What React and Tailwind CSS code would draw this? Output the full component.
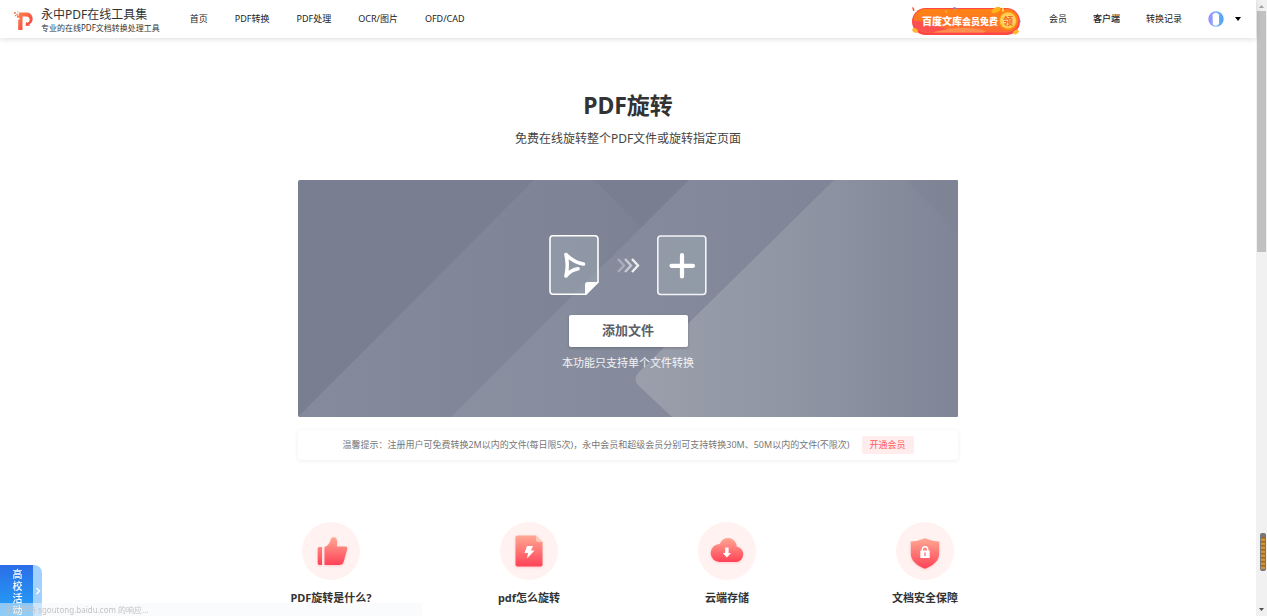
const navLinks = ['首页', 'PDF转换', 'PDF处理', 'OCR/图片', 'OFD/CAD']

const features = [
  { title: 'PDF旋转是什么?', Icon: ThumbIcon },
  { title: 'pdf怎么旋转', Icon: FileIcon },
  { title: '云端存储', Icon: CloudIcon },
  { title: '文档安全保障', Icon: ShieldIcon },
]

function Logo() {
  return (
    <svg className="size-5 shrink-0" viewBox="0 0 20 20" fill="none">
      <defs>
        <linearGradient id="logo" x1="0" y1="0" x2="1" y2="1">
          <stop offset="0" stopColor="#ff8a4c" />
          <stop offset="1" stopColor="#f5333f" />
        </linearGradient>
      </defs>
      <path d="M5 1.500h7.500a6.200 6.200 0 0 1 2.800 11.700l.9 1.300-4.600.6.4-4.400 1 1a2.900 2.900 0 0 0-1-6.200H8.500V19H4.200V8.500h1.500V6.800H3V4.500h2z" fill="url(#logo)" />
      <path d="M0 1h2v1.800H0zM2.400 2.800h1.800v1.700H2.400zM3.400.4h1.200v1.200H3.400zM.8 4h1.300v1.200H.8z" fill="#ff8558" />
    </svg>
  )
}

function Avatar() {
  return (
    <svg className="size-4" viewBox="0 0 16 16">
      <defs>
        <linearGradient id="avatar" x1="0" y1="0" x2="1" y2="0">
          <stop offset="0" stopColor="#9b8cff" />
          <stop offset=".5" stopColor="#7fb2ff" />
          <stop offset="1" stopColor="#4aa3f5" />
        </linearGradient>
      </defs>
      <circle cx="8" cy="8" r="7.700" fill="url(#avatar)" />
      <path d="M4.600 3.400Q8 0 11 3.800V13q-3 3.400-6.200.4z" fill="#fff" />
    </svg>
  )
}

function PromoBanner() {
  return (
    <a href="#vip" className="relative flex h-7 w-[109px] shrink-0 items-center">
      <svg className="absolute inset-0 size-full" viewBox="0 0 109 28">
        <defs>
          <linearGradient id="promo" x1="0" y1="0" x2="0" y2="1">
            <stop offset="0" stopColor="#ff8412" />
            <stop offset="1" stopColor="#ff6a35" />
          </linearGradient>
          <radialGradient id="coin">
            <stop offset="0" stopColor="#fff0a8" />
            <stop offset="1" stopColor="#ffc63c" />
          </radialGradient>
        </defs>
        <rect x="0" y="1" width="108" height="27" rx="13.500" fill="#ff4747" />
        <rect x="1.500" y="2" width="105" height="23.500" rx="11.700" fill="url(#promo)" />
        <path d="M1 14q9-1 14 3 8-2 12 3 9 1 13 5H13Q2 24 1 14z" fill="#ff5050" />
        <path d="M22 25q30-8 52-1l-2 1.500H22z" fill="#ff9150" />
        <ellipse cx="84" cy="3" rx="5" ry="2.400" fill="#ffb21c" transform="rotate(-25 84 3)" />
        <ellipse cx="3" cy="23.500" rx="3" ry="2" fill="#ffb830" transform="rotate(30 3 23.500)" />
        <ellipse cx="104" cy="25" rx="3" ry="2" fill="#ffb830" transform="rotate(-30 104 25)" />
        <path d="M0 0l2 1 .5 3L1 4z" fill="#ff5a45" />
        <path d="M41 0l3 .5 1 1.500-3-.5zM107 13l2 1-1 1.500z" fill="#6f8cf0" />
        <path d="M90 1l1.500-.5.5 4H90zM34 3l1 3-1.500-1z" fill="#ffd257" />
        <circle cx="96" cy="14" r="9.300" fill="#f98b14" />
        <circle cx="96" cy="13.500" r="8.300" fill="url(#coin)" />
      </svg>
      <span className="relative pl-[10px] text-[10px] font-black leading-4 text-white">
        百度文库<span className="text-[9px]">会员免费</span>
      </span>
      <span className="absolute right-0 w-[26px] text-center text-[10px] font-bold leading-4 text-[#f2671f]">领</span>
    </a>
  )
}

function Header() {
  return (
    <header className="relative z-10 flex h-[38px] shrink-0 items-center bg-white px-[14px] text-[9px] text-[#222] shadow-[0_1px_6px_rgba(0,0,0,0.14)]">
      <a href="#home" className="flex items-center gap-[7px] whitespace-nowrap pt-1">
        <Logo />
        <span className="flex flex-col text-[#333]">
          <span className="text-xs leading-[14px]">永中PDF在线工具集</span>
          <span className="text-[8px] leading-3">专业的在线PDF文档转换处理工具</span>
        </span>
      </a>
      <nav className="ml-[30px] flex items-center gap-[27px] whitespace-nowrap">
        {navLinks.map(link => (
          <a key={link} href="#tools">{link}</a>
        ))}
      </nav>
      <div className="ml-auto flex items-center gap-[26px] whitespace-nowrap">
        <div className="pr-[2px] pt-1">
          <PromoBanner />
        </div>
        <a href="#member">会员</a>
        <a href="#client" className="font-medium">客户端</a>
        <a href="#history">转换记录</a>
        <button type="button" aria-label="账户" className="flex items-center gap-[10px]">
          <Avatar />
          <svg className="h-1 w-2" viewBox="0 0 8 4"><path d="M1 0h6L4 4z" fill="#000" /></svg>
        </button>
      </div>
    </header>
  )
}

function PanelBackground() {
  return (
    <svg className="absolute inset-0 size-full" viewBox="0 0 660 237" preserveAspectRatio="none">
      <defs>
        <linearGradient id="band1" x1="0" y1="0" x2="1" y2="0">
          <stop offset="0" stopColor="#858b9c" />
          <stop offset="1" stopColor="#7b8093" />
        </linearGradient>
        <linearGradient id="band2" x1="0" y1="0" x2="1" y2="0">
          <stop offset="0" stopColor="#8a90a0" />
          <stop offset="1" stopColor="#7c8294" />
        </linearGradient>
        <linearGradient id="band3" x1="0" y1="0" x2="1" y2="0">
          <stop offset="0" stopColor="#9b9fac" />
          <stop offset=".5" stopColor="#8f95a3" />
          <stop offset="1" stopColor="#7f8596" />
        </linearGradient>
      </defs>
      <path d="M0 0h660v237H0z" fill="#797e91" />
      <path d="M0 237L236 0h60l96 96v141z" fill="url(#band1)" />
      <path d="M153 237L391 0h269v237z" fill="url(#band2)" />
      <path d="M374 237l-33-31q-7-7 0-14L536 0h124v237z" fill="url(#band3)" />
      <path d="M609 0h51v54z" fill="#7c8294" fillOpacity=".4" />
    </svg>
  )
}

function ConvertIcons() {
  return (
    <svg className="h-[62px] w-[160px]" viewBox="0 0 160 62" fill="none">
      <path d="M5 1.800h42a3 3 0 0 1 3 3V48L38 60.300H5a3 3 0 0 1-3-3V4.800a3 3 0 0 1 3-3z" fill="#9ba5b0" fillOpacity=".6" stroke="#fff" strokeWidth="1.600" />
      <path d="M37 61V50.500a2.500 2.500 0 0 1 2.500-2.500H51z" fill="#fff" />
      <path d="M18 20.500c1.600 7 1.600 14.500 0 21.500M18 20.500c5 5 10.500 8.500 17.500 9.500M18 42c3-4 6-6 12-7.200" stroke="#fff" strokeWidth="3.500" strokeLinecap="round" strokeLinejoin="round" />
      <g strokeWidth="2.400">
        <path d="M70 25l6 6.500-6 6.500" stroke="#fff" strokeOpacity=".3" />
        <path d="M77 25l6 6.500-6 6.500" stroke="#fff" strokeOpacity=".55" />
        <path d="M84 25l6 6.500-6 6.500" stroke="#fff" strokeOpacity=".85" />
      </g>
      <rect x="109.800" y="2" width="48" height="58.500" rx="3" fill="#9ba5b0" fillOpacity=".6" stroke="#fff" strokeOpacity=".9" strokeWidth="1.600" />
      <path d="M134 21v21.500M123.500 31.800h21.500" stroke="#fff" strokeWidth="4.200" strokeLinecap="round" />
    </svg>
  )
}

function IconGradient({ id }) {
  return (
    <defs>
      <linearGradient id={id} x1="0" y1="0" x2="0" y2="1">
        <stop offset="0" stopColor="#ffa893" />
        <stop offset="1" stopColor="#ff4257" />
      </linearGradient>
    </defs>
  )
}

const iconClass = 'size-[58px] drop-shadow-[0_1px_1px_rgba(255,80,90,0.25)]'

function ThumbIcon() {
  return (
    <svg className={iconClass} viewBox="0 0 58 58">
      <IconGradient id="thumb" />
      <path d="M17.500 25H20v18h-2.500a1.800 1.800 0 0 1-1.800-1.800V26.800A1.800 1.800 0 0 1 17.500 25zM22.500 25q4-1 6-6.500c.8-2 .5-3.300 3.300-3.300 3 0 4 3.500 3 9.300h8.500a2 2 0 0 1 1.900 2.700l-3.700 13q-.8 2.800-3.500 2.800H22.500z" fill="url(#thumb)" />
    </svg>
  )
}

function FileIcon() {
  return (
    <svg className={iconClass} viewBox="0 0 58 58">
      <IconGradient id="file" />
      <path d="M17.500 13.500H36l6.500 6.500v22.500a2 2 0 0 1-2 2h-23a2 2 0 0 1-2-2v-27a2 2 0 0 1 2-2z" fill="url(#file)" />
      <path d="M36 13.500l6.500 6.500H38a2 2 0 0 1-2-2z" fill="#ffc9bd" />
      <path d="M27 24h6l-2 4.500h3.500L27 36.500l1-5.500h-3.500z" fill="#fff" />
    </svg>
  )
}

function CloudIcon() {
  return (
    <svg className={iconClass} viewBox="0 0 58 58">
      <IconGradient id="cloud" />
      <path d="M21.500 40a9 9 0 0 1 .3-18 8.600 8.600 0 0 1 16.800 2.500A7.800 7.800 0 0 1 38 40z" fill="url(#cloud)" />
      <path d="M27.200 25.500h3.400V31H33l-4.100 4.500L24.800 31h2.400z" fill="#fff" />
    </svg>
  )
}

function ShieldIcon() {
  return (
    <svg className={iconClass} viewBox="0 0 58 58">
      <IconGradient id="shield" />
      <path d="M29 16.200q7 3 14.200 3.300v12.500c0 6.500-6 11.500-14.200 14.800-8.200-3.300-14.200-8.300-14.200-14.800V19.500Q22 19.200 29 16.200z" fill="url(#shield)" />
      <path d="M26.300 29v-1.500a2.700 2.700 0 0 1 5.400 0V29" fill="none" stroke="#fff" strokeWidth="1.400" />
      <rect x="24.300" y="28.500" width="9.400" height="7.500" rx=".6" fill="#fff" />
      <path d="M28.400 30.500h1.200v3.500h-1.200z" fill="#ff5a68" />
    </svg>
  )
}

function PageScrollbar() {
  return (
    <aside className="relative flex w-[11px] shrink-0 flex-col items-center justify-between bg-[#f1f1f1] py-1">
      <svg className="h-1 w-[7px]" viewBox="0 0 7 4"><path d="M1 4h5L3.500 1z" fill="#a3a3a3" /></svg>
      <div className="absolute inset-x-px top-[11px] h-[241px] bg-[#c1c1c1]" />
      <svg className="h-1 w-[7px]" viewBox="0 0 7 4"><path d="M1 0h5L3.500 3z" fill="#505050" /></svg>
      <svg className="absolute bottom-[45px] right-px h-[38px] w-1.5" viewBox="0 0 6 38">
        <rect width="6" height="38" rx="2" fill="#777" />
        <rect x="1" y="4" width="4" height="32" fill="#d9922a" />
        <path d="M3 4v32" stroke="#8a6a3a" strokeWidth="4" strokeDasharray="1.500 2.500" />
      </svg>
    </aside>
  )
}

function CampusTab() {
  return (
    <a href="#campus" className="fixed bottom-0 left-0 flex h-[51px] overflow-hidden rounded-tr-lg bg-[#a3d1ff] text-white">
      <span className="flex w-[33px] justify-center bg-linear-to-b from-[#2b6de8] to-[#25a4f6] pl-[2px] pt-[3px]">
        <span className="w-[10px] text-[10px] font-medium leading-[12px]">高校活动</span>
      </span>
      <span className="flex w-[9px] items-center justify-center">
        <svg className="h-2 w-1.5" viewBox="0 0 6 8" fill="none"><path d="M1.500 1l3 3-3 3" stroke="#fff" strokeWidth="1.400" /></svg>
      </span>
    </a>
  )
}

export default function App() {
  return (
    <div className="flex h-screen overflow-hidden bg-white font-['Noto_Sans','Noto_Sans_CJK_SC',sans-serif]">
      <div className="flex min-w-0 flex-1 flex-col">
        <Header />

        <main className="flex flex-1 flex-col items-center">
          <h1 className="mt-[51px] text-[23px] font-bold leading-8 text-[#333]">PDF旋转</h1>
          <p className="mt-[9px] text-xs leading-[18px] text-[#444]">免费在线旋转整个PDF文件或旋转指定页面</p>

          {/* Upload panel */}
          <section className="relative mt-8 w-full max-w-[660px] overflow-hidden rounded-[2px]">
            <PanelBackground />
            <div className="relative flex flex-col items-center pb-[46px] pt-[54px]">
              <ConvertIcons />
              <button type="button" className="mt-[19px] h-8 w-[119px] rounded-[2px] bg-white text-[13px] font-bold text-[#5b6068] shadow-[0_1px_3px_rgba(0,0,0,0.2)]">
                添加文件
              </button>
              <p className="mt-2 text-[11px] leading-4 text-white/90">本功能只支持单个文件转换</p>
            </div>
          </section>

          {/* Limits notice */}
          <section className="mt-[13px] flex min-h-[30px] w-full max-w-[660px] items-center justify-center gap-3 rounded bg-white text-[9px] text-[#777] shadow-[0_1px_5px_rgba(0,0,0,0.07)]">
            <p>温馨提示：注册用户可免费转换2M以内的文件(每日限5次)，永中会员和超级会员分别可支持转换30M、50M以内的文件(不限次)</p>
            <a href="#vip" className="shrink-0 rounded-[2px] bg-[#ffecec] px-2 leading-[18px] text-[#ff5c5c]">开通会员</a>
          </section>

          {/* Features */}
          <section className="mt-[62px] grid w-full max-w-[792px] grid-cols-4">
            {features.map(({ title, Icon }) => (
              <div key={title} className="flex flex-col items-center">
                <div className="rounded-full bg-[#fff2f1]">
                  <Icon />
                </div>
                <h2 className="mt-[10px] text-[11px] font-bold leading-4 text-[#333]">{title}</h2>
              </div>
            ))}
          </section>
        </main>
      </div>

      <PageScrollbar />
      <CampusTab />
      <div className="pointer-events-none fixed bottom-0 left-0 w-1/3 rounded-tr-[2px] bg-[#f6f7f9]/50 pl-1 text-[8px] leading-[13px] text-[#c4c4c4]">
        正在等待 sgoutong.baidu.com 的响应...
      </div>
    </div>
  )
}
